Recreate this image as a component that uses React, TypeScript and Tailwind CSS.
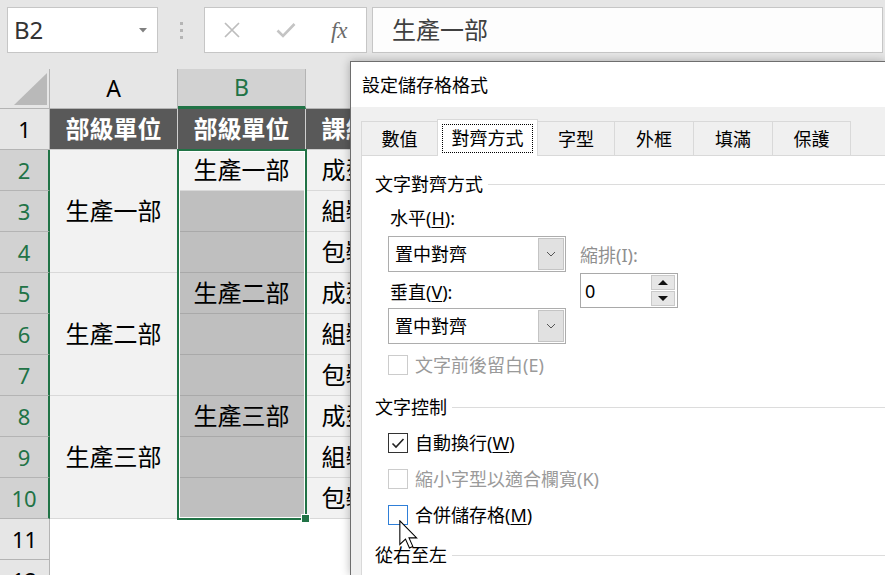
import React from 'react';

const HDR = 'border-[#b4b4b4]';

function TopBar() {
  return (
    <div className="h-[69px] bg-[#e6e6e6] flex pt-[7px] pl-[7px] pr-[2px]">
      {/* name box */}
      <div className="w-[151px] h-[46px] bg-white border border-[#c6c6c6] flex items-center justify-between pl-[6px] pr-[10px]">
        <span className="text-[24px] leading-none text-[#333]">B2</span>
        <svg width="8" height="5" viewBox="0 0 8 5">
          <path d="M0 0h8L4 4.5z" fill="#808080" />
        </svg>
      </div>
      <div className="w-[46px] flex flex-col items-center pt-[15px] gap-[4px]">
        <div className="w-[3px] h-[3px] bg-[#b5b5b5]" />
        <div className="w-[3px] h-[3px] bg-[#b5b5b5]" />
        <div className="w-[3px] h-[3px] bg-[#b5b5b5]" />
      </div>
      {/* formula buttons */}
      <div className="w-[163px] h-[46px] bg-white border border-[#c6c6c6] flex items-center">
        <div className="w-[54px] flex justify-center">
          <svg width="16" height="16" viewBox="0 0 16 16">
            <path d="M1 1L15 15M15 1L1 15" stroke="#bdbdbd" strokeWidth="1.7" />
          </svg>
        </div>
        <div className="w-[54px] flex justify-center">
          <svg width="20" height="16" viewBox="0 0 20 16">
            <path d="M1.5 8.5L7 14L18.5 2" stroke="#c4c4c4" strokeWidth="2.6" fill="none" />
          </svg>
        </div>
        <div className="w-[54px] flex justify-center">
          <span className="font-['Liberation_Serif',serif] italic text-[23px] leading-none text-[#6a6a6a]">fx</span>
        </div>
      </div>
      {/* formula box */}
      <div className="ml-[5px] flex-1 h-[46px] bg-[#fdfdfd] border border-[#c6c6c6] flex items-center pl-[19px] text-[24px] text-[#404040]">
        生產一部
      </div>
    </div>
  );
}

function RowHead({ n, sel }: { n: number; sel?: boolean }) {
  return (
    <div
      className={
        sel
          ? 'h-[41px] bg-[#d2d2d2] text-[#217346] border-b border-[#b4b4b4] border-r-2 border-r-[#217346] flex items-center justify-center text-[22px]'
          : 'h-[41px] bg-[#e6e6e6] text-black border-b border-r border-[#b4b4b4] flex items-center justify-center text-[22px]'
      }
    >
      {n}
    </div>
  );
}

function DarkCell({ text }: { text: string }) {
  return (
    <div className="h-[41px] bg-[#595959] border-r border-b border-[#cfcfcf] flex items-center justify-center text-white font-bold text-[24px] overflow-hidden whitespace-nowrap">
      {text}
    </div>
  );
}

function Cell({ text, tall }: { text?: string; tall?: boolean }) {
  return (
    <div
      className={
        tall
          ? 'h-[123px] bg-[#f2f2f2] border-r border-b border-[#d9d9d9] flex items-center justify-center text-[24px]'
          : 'h-[41px] bg-[#f2f2f2] border-r border-b border-[#d9d9d9] flex items-center justify-center text-[24px] whitespace-nowrap overflow-hidden'
      }
    >
      {text}
    </div>
  );
}

function SelCell({ text }: { text?: string }) {
  return (
    <div className="h-[41px] bg-[#bfbfbf] border-r border-b border-[#a9a9a9] flex items-center justify-center text-[24px]">
      {text}
    </div>
  );
}

function Blank() {
  return <div className="h-[41px] bg-white" />;
}

function Sheet() {
  const rows = [2, 3, 4, 5, 6, 7, 8, 9, 10];
  const cNames = ['成型一課', '組裝一課', '包裝一課', '成型二課', '組裝二課', '包裝二課', '成型三課', '組裝三課', '包裝三課'];
  return (
    <div className="flex text-black">
      {/* row headers */}
      <div className="w-[50px] flex flex-col">
        <div className={`h-[40px] bg-[#e6e6e6] border-b border-r ${HDR} flex items-end justify-end pr-[2px] pb-[3px]`}>
          <svg width="33" height="32" viewBox="0 0 33 32">
            <path d="M33 0V32H0z" fill="#b9b9b9" />
          </svg>
        </div>
        <RowHead n={1} />
        {rows.map((n) => (
          <RowHead key={n} n={n} sel />
        ))}
        <RowHead n={11} />
        <RowHead n={12} />
      </div>

      {/* column A */}
      <div className="w-[128px] flex flex-col">
        <div className={`h-[40px] bg-[#e6e6e6] border-b border-r ${HDR} flex items-center justify-center text-[23px]`}>A</div>
        <DarkCell text="部級單位" />
        <Cell tall text="生產一部" />
        <Cell tall text="生產二部" />
        <Cell tall text="生產三部" />
        <Blank />
        <Blank />
      </div>

      {/* column B */}
      <div className="w-[128px] flex flex-col">
        <div className="h-[40px] bg-[#d2d2d2] border-r border-[#b4b4b4] border-b-[3px] border-b-[#217346] flex items-center justify-center text-[23px] text-[#217346]">
          B
        </div>
        <DarkCell text="部級單位" />
        <div className="relative">
          <Cell text="生產一部" />
          <SelCell />
          <SelCell />
          <SelCell text="生產二部" />
          <SelCell />
          <SelCell />
          <SelCell text="生產三部" />
          <SelCell />
          <SelCell />
          <div className="absolute -left-px -top-px -right-px -bottom-px z-10 border-2 border-[#217346] shadow-[inset_0_0_0_1px_white]" />
          <div className="absolute -right-[3px] -bottom-[3px] z-20 w-[7px] h-[7px] bg-[#217346] ring-1 ring-white" />
        </div>
        <Blank />
        <Blank />
      </div>

      {/* column C: only its left edge shows beside the dialog */}
      <div className="w-[44px] overflow-hidden">
        <div className="w-[128px] flex flex-col">
          <div className={`h-[40px] bg-[#e6e6e6] border-b ${HDR}`} />
          <DarkCell text="課級單位" />
          {cNames.map((c, i) => (
            <Cell key={i} text={c} />
          ))}
          <Blank />
          <Blank />
        </div>
      </div>

      <div className="flex-1 flex flex-col">
        <div className={`h-[40px] bg-[#e6e6e6] border-b ${HDR}`} />
      </div>
    </div>
  );
}

function Chevron() {
  return (
    <svg width="10" height="6" viewBox="0 0 10 6">
      <path d="M1 1L5 5L9 1" stroke="#555" strokeWidth="1" fill="none" />
    </svg>
  );
}

function Dropdown({ className }: { className: string }) {
  return (
    <div className={`w-[178px] h-[36px] border border-[#adadad] bg-white flex items-center justify-between pl-[6px] pr-[1px] ${className}`}>
      <span>置中對齊</span>
      <div className="w-[26px] h-[32px] bg-[#e1e1e1] border border-[#c4c4c4] flex items-center justify-center">
        <Chevron />
      </div>
    </div>
  );
}

function Spinner() {
  return (
    <div className="mt-[8px] w-[98px] h-[35px] border border-[#a9a9a9] bg-white flex items-center justify-between pl-[4px] pr-[2px]">
      <span>0</span>
      <div className="flex flex-col gap-px w-[24px]">
        <div className="h-[15px] bg-[#e6e6e6] border border-[#cacaca] flex items-center justify-center">
          <svg width="10" height="5" viewBox="0 0 10 5">
            <path d="M0 5L5 0L10 5z" fill="#111" />
          </svg>
        </div>
        <div className="h-[15px] bg-[#e6e6e6] border border-[#cacaca] flex items-center justify-center">
          <svg width="10" height="5" viewBox="0 0 10 5">
            <path d="M0 0L10 0L5 5z" fill="#111" />
          </svg>
        </div>
      </div>
    </div>
  );
}

type BoxState = 'checked' | 'disabled' | 'hover';

function CheckRow({ state, className, children }: { state: BoxState; className: string; children: React.ReactNode }) {
  const box =
    state === 'checked'
      ? 'border-[#333333]'
      : state === 'hover'
        ? 'border-[#2f7fd8]'
        : 'border-[#cccccc]';
  return (
    <div className={`flex items-center h-[20px] pl-[26px] ${className}`}>
      <div className={`w-[20px] h-[20px] border bg-white flex items-center justify-center ${box}`}>
        {state === 'checked' && (
          <svg width="16" height="16" viewBox="0 0 16 16">
            <path d="M2.5 8.5L6 12L13.5 4" stroke="#222" strokeWidth="1.6" fill="none" />
          </svg>
        )}
      </div>
      <span className={state === 'disabled' ? 'ml-[7px] text-[#9a9a9a]' : 'ml-[7px]'}>{children}</span>
    </div>
  );
}

function GroupHeader({ className, children }: { className: string; children: React.ReactNode }) {
  return (
    <div className={`flex items-center h-[20px] pl-[13px] ${className}`}>
      <span>{children}</span>
      <div className="flex-1 h-px bg-[#dcdcdc] ml-[5px]" />
    </div>
  );
}

function FormatDialog() {
  const tabs = [
    { label: '數值', w: 'w-[77px]' },
    { label: '對齊方式', w: 'w-[101px]', active: true },
    { label: '字型', w: 'w-[78px]' },
    { label: '外框', w: 'w-[80px]' },
    { label: '填滿', w: 'w-[80px]' },
    { label: '保護', w: 'w-[79px]' },
  ];
  return (
    <div className="absolute left-[350px] top-[61px] right-0 bottom-0 z-30 flex flex-col bg-[#f0f0f0] border-l border-t border-[#6e6e6e] shadow-[0_0_9px_rgba(0,0,0,0.28)] text-[18px] leading-[20px] text-black">
      <div className="h-[45px] bg-white flex items-center pl-[11px]">設定儲存格格式</div>
      <div className="flex-1 flex flex-col pt-[12px] pl-[10px]">
        <div className="relative z-10 -mb-px flex items-start h-[37px]">
          {tabs.map((t, i) =>
            t.active ? (
              <div
                key={t.label}
                className={`relative ${t.w} h-[37px] -ml-px bg-white border border-b-0 border-[#d9d9d9] flex items-center justify-center`}
              >
                {t.label}
                <div className="absolute left-[4px] right-[4px] top-[4px] bottom-[3px] border border-dotted border-black" />
              </div>
            ) : (
              <div
                key={t.label}
                className={`${t.w} h-[34px] mt-[2px] ${i > 0 ? '-ml-px' : ''} border border-b-0 border-[#d9d9d9] flex items-center justify-center`}
              >
                {t.label}
              </div>
            ),
          )}
        </div>
        <div className="flex-1 bg-white border-t border-l border-[#d9d9d9]">
          <GroupHeader className="mt-[18px]">文字對齊方式</GroupHeader>
          <div className="flex pl-[26px]">
            <div className="flex flex-col w-[178px]">
              <div className="mt-[14px] pl-[2px] h-[20px]">
                水平(<span className="underline underline-offset-2">H</span>):
              </div>
              <Dropdown className="mt-[8px]" />
              <div className="mt-[10px] pl-[2px] h-[20px]">
                垂直(<span className="underline underline-offset-2">V</span>):
              </div>
              <Dropdown className="mt-[6px]" />
            </div>
            <div className="flex flex-col ml-[14px]">
              <div className="mt-[51px] h-[20px] text-[#8f8f8f]">縮排(I):</div>
              <Spinner />
            </div>
          </div>
          <CheckRow className="mt-[11px]" state="disabled">
            文字前後留白(E)
          </CheckRow>
          <GroupHeader className="mt-[22px]">文字控制</GroupHeader>
          <CheckRow className="mt-[16px]" state="checked">
            自動換行(<span className="underline underline-offset-2">W</span>)
          </CheckRow>
          <CheckRow className="mt-[16px]" state="disabled">
            縮小字型以適合欄寬(K)
          </CheckRow>
          <CheckRow className="mt-[16px]" state="hover">
            合併儲存格(<span className="underline underline-offset-2">M</span>)
          </CheckRow>
          <GroupHeader className="mt-[20px]">從右至左</GroupHeader>
        </div>
      </div>
    </div>
  );
}

function Cursor() {
  return (
    <svg className="absolute left-[399px] top-[520px] z-40" width="20" height="29" viewBox="0 0 13 19">
      <path
        d="M0.5 0.5V16L4.2 12.5L6.8 18.3L9 17.3L6.5 11.7H11.5Z"
        fill="white"
        stroke="black"
        strokeWidth="0.7"
      />
    </svg>
  );
}

export default function App() {
  return (
    <div className="relative w-[885px] h-[575px] overflow-hidden bg-white font-['Noto_Sans','Noto_Sans_CJK_TC',sans-serif]">
      <TopBar />
      <Sheet />
      <FormatDialog />
      <Cursor />
    </div>
  );
}
